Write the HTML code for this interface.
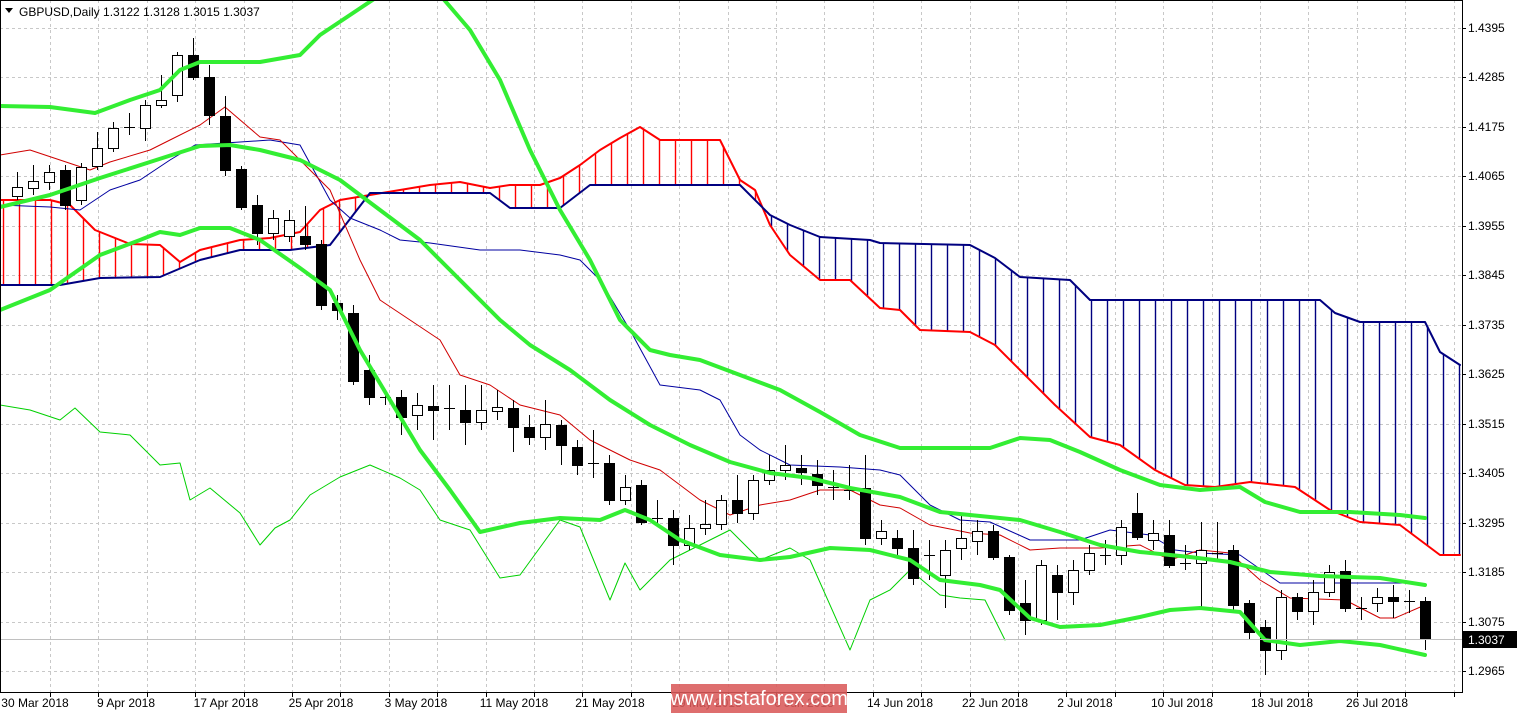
<!DOCTYPE html>
<html><head><meta charset="utf-8"><style>
html,body{margin:0;padding:0;background:#fff;width:1517px;height:715px;overflow:hidden}
svg{display:block;font-family:"Liberation Sans",sans-serif}
</style></head><body>
<svg id="c" width="1517" height="715" xmlns="http://www.w3.org/2000/svg">
<rect x="0" y="0" width="1517" height="715" fill="#fff"/>
<g id="grid"></g>
<g id="cloud"></g>
<g id="lines"></g>
<g id="candles"></g>
<g id="bands"></g>
<line x1="0" y1="639.5" x2="1462" y2="639.5" stroke="#c0c0c0" stroke-width="1"/>
<rect x="0.5" y="0.5" width="1462" height="692" fill="none" stroke="#000"/>
<g id="axis" font-size="12" fill="#000"></g>
<rect x="1463" y="631" width="54" height="17" fill="#000"/>
<text x="1468" y="644" font-size="12" fill="#fff">1.3037</text>
<path d="M5 8 L13 8 L9 13 Z" fill="#000"/>
<text x="19" y="16" font-size="12" fill="#000">GBPUSD,Daily  1.3122 1.3128 1.3015 1.3037</text>
<rect x="671" y="684" width="176" height="29" fill="#d95a5a" fill-opacity="0.88"/>
<text x="759" y="705" font-size="20" fill="#fff" text-anchor="middle">www.instaforex.com</text>
</svg>
<script>
var NS="http://www.w3.org/2000/svg";
function el(p,t,a,txt){var e=document.createElementNS(NS,t);for(var k in a)e.setAttribute(k,a[k]);if(txt)e.textContent=txt;document.getElementById(p).appendChild(e);return e;}
// grid
for(var x=50;x<1462;x+=48.4)el("grid","line",{x1:Math.round(x)+.5,y1:0,x2:Math.round(x)+.5,y2:692,stroke:"#c8c8c8","stroke-dasharray":"3,3"});
var prices=["1.4395","1.4285","1.4175","1.4065","1.3955","1.3845","1.3735","1.3625","1.3515","1.3405","1.3295","1.3185","1.3075","1.2965"];
for(var i=0;i<14;i++){var y=Math.round(28+i*49.46);
el("grid","line",{x1:0,y1:y+.5,x2:1462,y2:y+.5,stroke:"#c8c8c8","stroke-dasharray":"3,3"});
el("grid","line",{x1:1462,y1:y+.5,x2:1466,y2:y+.5,stroke:"#000"});
el("axis","text",{x:1468,y:y+4},prices[i]);}
var dates=[[35,"30 Mar 2018"],[126,"9 Apr 2018"],[226,"17 Apr 2018"],[321,"25 Apr 2018"],[416,"3 May 2018"],[514,"11 May 2018"],[610,"21 May 2018"],[707,"29 May 2018"],[804,"6 Jun 2018"],[900,"14 Jun 2018"],[995,"22 Jun 2018"],[1085,"2 Jul 2018"],[1182,"10 Jul 2018"],[1282,"18 Jul 2018"],[1377,"26 Jul 2018"]];
dates.forEach(function(d){el("axis","text",{x:d[0],y:707,"text-anchor":"middle"},d[1]);});
for(var x=50;x<1462;x+=48.4)el("axis","line",{x1:Math.round(x)+.5,y1:692,x2:Math.round(x)+.5,y2:697,stroke:"#000"});
function interp(pts,x){for(var i=0;i<pts.length-1;i++){if(x>=pts[i][0]&&x<=pts[i+1][0]){var t=(x-pts[i][0])/(pts[i+1][0]-pts[i][0]);return pts[i][1]+t*(pts[i+1][1]-pts[i][1]);}}return null;}
function poly(g,pts,col,w){el(g,"polyline",{points:pts.map(function(p){return p.join(",")}).join(" "),fill:"none",stroke:col,"stroke-width":w,"stroke-linejoin":"round","stroke-linecap":"round"});}
var A=[[0,200],[50,200],[70,205],[95,230],[130,244],[160,245],[180,262],[200,250],[240,240],[270,238],[300,232],[320,210],[340,200],[370,195],[400,190],[430,185],[460,182],[490,188],[510,185],[540,185],[560,178],[580,165],[600,150],[620,138],[640,127],[660,140],[720,140],[740,180],[755,190],[770,225],[790,255],[820,280],[850,280],[880,308],[900,310],[920,330],[970,332],[995,345],[1020,370],[1055,405],[1090,437],[1120,445],[1155,470],[1185,485],[1215,487],[1250,482],[1295,487],[1330,510],[1360,522],[1400,525],[1440,555],[1460,555]];
var B=[[0,285],[60,285],[100,278],[160,277],[200,260],[240,250],[290,250],[330,245],[370,193],[490,193],[510,208],[560,208],[590,185],[740,185],[770,215],[790,225],[820,237],[870,240],[880,243],[970,245],[995,258],[1020,277],[1070,280],[1090,300],[1320,300],[1335,313],[1360,322],[1425,322],[1440,352],[1460,365]];
for(var x=3;x<1460;x+=16){var a=interp(A,x),b=interp(B,x);if(a==null||b==null)continue;
el("cloud","line",{x1:x+.5,y1:a,x2:x+.5,y2:b,stroke:a<b?"#ff0000":"#000080","stroke-width":1.4});}
poly("cloud",A,"#ff0000",2);poly("cloud",B,"#000080",2);
var T=[[0,155],[30,150],[60,160],[90,170],[110,162],[150,150],[170,140],[200,125],[225,107],[260,137],[280,140],[300,160],[330,190],[360,260],[380,300],[410,320],[440,340],[460,375],[490,385],[520,405],[560,415],[590,440],[630,460],[660,470],[700,500],[730,515],[760,505],[790,500],[820,490],[850,490],[880,505],[900,508],[930,525],[970,533],[1000,535],[1030,550],[1060,548],[1100,548],[1140,545],[1170,560],[1200,550],[1230,553],[1260,580],[1290,598],[1345,600],[1380,618],[1395,618],[1425,605]];
var K=[[0,205],[50,207],[80,210],[110,190],[140,180],[170,160],[195,145],[225,143],[270,140],[300,145],[330,200],[350,218],[380,230],[400,240],[430,243],[480,250],[520,250],[560,255],[580,260],[600,280],[630,330],[660,385],[700,390],[720,400],[740,435],[760,450],[790,465],[840,467],[880,470],[900,475],[930,505],[960,520],[990,522],[1030,540],[1080,540],[1110,530],[1150,535],[1175,550],[1200,553],[1240,555],[1280,583],[1298,583],[1420,583]];
var C=[[0,405],[30,410],[60,420],[75,408],[100,432],[130,435],[160,465],[180,463],[190,500],[210,488],[240,513],[260,545],[275,528],[290,520],[310,495],[340,477],[370,465],[400,478],[420,490],[440,520],[470,530],[500,578],[520,575],[560,520],[580,527],[610,600],[625,563],[640,590],[670,560],[700,545],[730,530],[760,560],[790,548],[810,560],[850,650],[870,600],[890,590],[910,570],[940,595],[960,598],[985,600],[1005,640]];
poly("lines",C,"#00d000",1);poly("lines",K,"#0000a0",1);poly("lines",T,"#d00000",1);
var D=[[187,196,172,200,1],[181,188,165,195,1],[172,182,165,190,1],[170,205,165,210,0],[167,200,163,205,1],[148,166,132,170,1],[128,148,122,152,1],[127,127,113,135,1],[105,128,100,141,1],[100,105,75,108,1],[55,95,52,102,1],[55,77,38,80,0],[77,115,65,125,0],[116,170,96,176,0],[169,207,166,210,0],[205,233,195,245,0],[218,233,210,240,1],[220,236,210,242,1],[236,244,206,250,0],[244,305,240,310,0],[303,310,295,320,0],[313,381,305,385,0],[370,397,355,405,0],[397,397,390,405,1],[397,417,390,435,0],[405,415,393,430,1],[406,410,385,440,0],[408,408,385,430,1],[410,422,385,445,0],[410,422,385,430,1],[407,411,390,420,1],[408,427,400,452,0],[427,437,415,445,0],[424,437,400,450,1],[425,445,420,465,0],[447,465,440,475,0],[463,463,430,478,1],[463,500,455,505,0],[487,500,475,505,1],[485,522,480,525,0],[518,518,500,525,1],[518,545,510,565,0],[528,545,515,550,1],[524,528,500,535,1],[500,524,495,530,1],[500,513,475,523,0],[480,513,475,520,1],[470,480,455,485,1],[465,470,445,480,1],[468,472,455,485,0],[474,485,460,495,0],[487,487,470,500,1],[490,490,465,500,1],[488,538,455,545,0],[531,538,520,545,1],[538,548,530,555,0],[548,578,530,585,0],[555,555,540,580,1],[550,575,540,608,1],[538,548,515,560,1],[531,541,520,555,1],[531,557,525,560,0],[557,610,555,615,0],[603,620,580,635,0],[565,620,560,625,1],[575,592,565,620,0],[570,592,560,605,1],[553,570,545,575,1],[555,555,540,565,1],[527,555,520,565,1],[513,537,493,540,0],[533,540,520,550,1],[535,565,520,568,0],[563,563,545,570,1],[550,563,522,608,1],[553,553,522,560,1],[550,605,545,610,0],[603,632,600,640,0],[627,650,620,675,0],[597,650,590,660,1],[597,611,593,620,0],[592,611,580,625,1],[572,592,565,597,1],[571,608,560,612,0],[608,608,597,620,1],[597,603,588,612,1],[597,601,585,618,0],[601,601,590,613,1],[601,639,597,650,0]];
D.forEach(function(d,i){var x=17+16*i;var t=Math.min(d[0],d[1]),b=Math.max(d[0],d[1]);
el("candles","line",{x1:x+.5,y1:d[2],x2:x+.5,y2:d[3],stroke:"#000"});
if(b-t<2)el("candles","line",{x1:x-5,y1:t+.5,x2:x+6,y2:t+.5,stroke:"#000"});
else el("candles","rect",{x:x-5+.5,y:t+.5,width:10,height:b-t,fill:d[4]?"#fff":"#000",stroke:"#000"});});
var U=[[0,106],[50,107],[95,113],[130,100],[160,90],[180,70],[200,62],[260,62],[300,55],[320,35],[350,15],[380,-5]];
var U2=[[440,-5],[470,30],[500,80],[530,150],[560,210],[590,260],[620,320],[650,350],[670,355],[700,360],[740,375],[780,390],[820,412],[860,435],[900,448],[950,448],[990,448],[1020,438],[1050,440],[1080,452],[1120,470],[1160,485],[1200,490],[1240,487],[1265,502],[1300,512],[1350,512],[1400,515],[1425,518]];
var M=[[0,207],[50,195],[100,178],[150,162],[200,146],[230,145],[260,150],[300,160],[340,180],[380,210],[420,240],[460,280],[500,320],[530,345],[570,370],[610,400],[650,425],[690,445],[730,462],[770,473],[810,478],[850,488],[900,497],[940,512],[990,517],[1020,520],[1060,532],[1100,545],[1140,552],[1190,557],[1230,562],[1270,572],[1320,576],[1380,578],[1425,585]];
var L=[[0,310],[50,290],[100,255],[140,240],[160,232],[180,235],[200,228],[230,228],[260,240],[300,268],[330,290],[360,350],[390,400],[420,450],[450,490],[480,532],[520,523],[560,518],[600,520],[625,510],[650,520],[680,540],[720,555],[760,560],[790,557],[830,548],[870,550],[910,560],[940,580],[980,585],[1000,590],[1030,618],[1060,627],[1100,625],[1140,617],[1170,610],[1200,608],[1240,612],[1265,640],[1300,645],[1340,641],[1380,645],[1425,655]];
[U,U2,M,L].forEach(function(p){poly("bands",p,"#33ee33",4);});
</script>
</body></html>
